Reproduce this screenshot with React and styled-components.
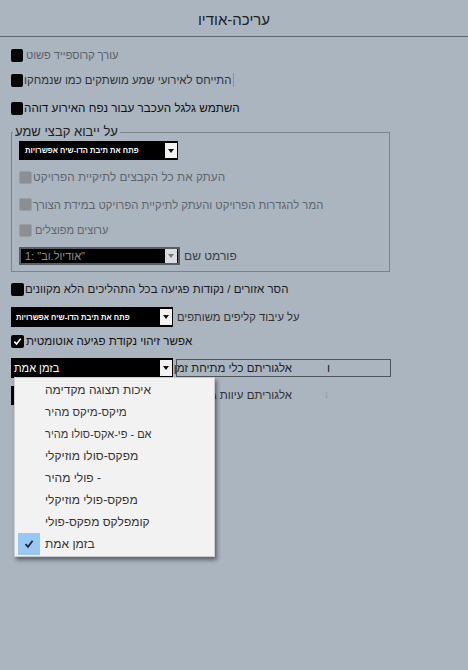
import React from 'react'
import styled, { createGlobalStyle } from 'styled-components';

const GlobalStyle = createGlobalStyle`
    html, body {
        margin: 0;
        padding: 0;
        background: #aab5c0;
    }
    body {
        font-family: "Liberation Sans", "DejaVu Sans", sans-serif;
    }
`;

const Page = styled.div`
    width: 468px;
    height: 670px;
    background: #aab5c0;
    overflow: hidden;
`;

const Header = styled.div`
    height: 37px;
    border-bottom: 1px solid #5d646b;
    display: flex;
    align-items: center;
    justify-content: center;
    font-size: 15px;
    color: #1e1e1e;
    direction: rtl;
    padding-top: 3px;
    box-sizing: border-box;
`;

const Body = styled.div`
    padding: 6px 0 0 11px;
    display: flex;
    flex-direction: column;
`;

const Row = styled.div`
    display: flex;
    align-items: center;
    height: ${({h}) => h}px;
    margin-top: ${({mt}) => mt || 0}px;
    position: relative;
`;

const boxColor = kind => {
    switch(kind){
        case "disabled":
            return "#8b8f94";
        default:
            return "#050505";
    }
}

const Box = styled.span`
    width: ${({kind}) => kind ? 13 : 12}px;
    height: 13px;
    border-radius: 2px;
    background: ${({kind}) => boxColor(kind)};
    border: ${({kind}) => kind === "disabled" ? "1px solid #9a9ea3" : "none"};
    box-sizing: border-box;
    flex-shrink: 0;
    display: flex;
    align-items: center;
    justify-content: center;
`;

const Text = styled.span`
    direction: rtl;
    unicode-bidi: isolate;
    white-space: nowrap;
    font-size: ${({size}) => size || 12}px;
    color: ${({color}) => color || "#222"};
    margin-left: ${({gap}) => gap || 1}px;
    padding-right: ${({caret}) => caret ? 2 : 0}px;
    border-right: ${({caret}) => caret ? "1px solid #8a9098" : "none"};
    line-height: 14px;
`;

const Fieldset = styled.fieldset`
    margin: 1px 0 0 0;
    padding: 1px 0 6px 7px;
    width: 379px;
    box-sizing: border-box;
    border: 1px solid #7b838b;
    min-inline-size: 0;
    display: flex;
    flex-direction: column;
`;

const Legend = styled.legend`
    direction: rtl;
    font-size: 13px;
    color: #222;
    padding: 0 2px;
    margin-left: -6px;
    line-height: 16px;
`;

const Select = styled.div`
    width: ${({w}) => w}px;
    height: ${({h}) => h}px;
    background: #000;
    box-sizing: border-box;
    border: ${({framed}) => framed ? "2px solid #585e65" : "none"};
    display: flex;
    align-items: center;
    justify-content: space-between;
    padding: 0 1px 0 ${({pl}) => pl || 5}px;
    flex-shrink: 0;
    position: relative;
`;

const SelectText = styled.span`
    direction: ${({ltr}) => ltr ? "ltr" : "rtl"};
    unicode-bidi: isolate;
    white-space: nowrap;
    color: ${({color}) => color || "#fff"};
    font-size: ${({size}) => size || 9}px;
    font-weight: ${({bold}) => bold ? 700 : 400};
`;

const Arrow = styled.span`
    width: 12px;
    height: ${({h}) => h || 15}px;
    background: ${({dim}) => dim ? "#d9dce0" : "#f2f2f2"};
    display: flex;
    align-items: center;
    justify-content: center;
    &::after {
        content: "";
        border-left: 3px solid transparent;
        border-right: 3px solid transparent;
        border-top: 4px solid ${({dim}) => dim ? "#777" : "#111"};
    }
`;

const Frame = styled.div`
    margin-left: 3px;
    width: 215px;
    height: 18px;
    box-sizing: border-box;
    border: 1px solid #4e545b;
    display: flex;
    align-items: center;
    padding-left: 3px;
`;

const FieldLabel = styled.span`
    direction: rtl;
    unicode-bidi: isolate;
    white-space: nowrap;
    width: ${({w}) => w}px;
    text-align: right;
    font-size: 11.5px;
    color: ${({color}) => color || "#222"};
    margin-left: ${({ml}) => ml || 0}px;
`;

const Stray = styled.span`
    font-size: 12px;
    color: ${({faint}) => faint ? "#9aa3ad" : "#222"};
    margin-left: ${({ml}) => ml}px;
`;

const Menu = styled.div`
    position: absolute;
    left: 3px;
    top: 19px;
    width: 201px;
    height: 180px;
    box-sizing: border-box;
    background: #f2f2f2;
    border: 1px solid #c9ccd0;
    box-shadow: 2px 3px 4px rgba(0, 0, 0, 0.45);
    padding: 1px 0;
    z-index: 10;
    display: flex;
    flex-direction: column;
`;

const MenuItem = styled.div`
    height: 22px;
    display: flex;
    align-items: center;
`;

const Tick = styled.span`
    width: 22px;
    height: 22px;
    margin-left: 3px;
    margin-right: 5px;
    background: ${({on}) => on ? "#99c8f3" : "transparent"};
    display: flex;
    align-items: center;
    justify-content: center;
`;

const ItemText = styled.span`
    direction: ${({ltr}) => ltr ? "ltr" : "rtl"};
    unicode-bidi: isolate;
    white-space: nowrap;
    font-size: ${({size}) => size || 12}px;
    color: #363636;
`;

const Check = ({color = "#fff", size = 9}) => (
    <svg width={size} height={size} viewBox="0 0 10 10">
        <path d="M1.5 5.2 L4 7.8 L8.6 1.8" fill="none" stroke={color} strokeWidth="1.8" />
    </svg>
);

const items = [
    { label: "איכות תצוגה מקדימה" },
    { label: "מיקס-מיקס מהיר", size: 11.5 },
    { label: "אם - פי-אקס-סולו מהיר", size: 11 },
    { label: "מפקס-סולו מוזיקלי" },
    { label: "פולי מהיר -", ltr: true },
    { label: "מפקס-פולי מוזיקלי" },
    { label: "קומפלקס מפקס-פולי" },
    { label: "בזמן אמת", on: true },
];

export default () => {
    return(
        <Page>
            <GlobalStyle />
            <Header>עריכה-אודיו</Header>
            <Body>
                <Row h={24}>
                    <Box />
                    <Text gap={3} color="#5a5f66" size={11}>עורך קרוספייד פשוט</Text>
                </Row>
                <Row h={26}>
                    <Box />
                    <Text color="#2e3236" size={11.4} caret>התייחס לאירועי שמע מושתקים כמו שנמחקו</Text>
                </Row>
                <Row h={30}>
                    <Box />
                    <Text color="#111" size={11.7}>השתמש גלגל העכבר עבור נפח האירוע דוהה</Text>
                </Row>

                <Fieldset>
                    <Legend>על ייבוא קבצי שמע</Legend>
                    <Row h={19}>
                        <Select w={159} h={19} pl={6}>
                            <SelectText bold size={7.6}>פתח את תיבת הדו-שיח אפשרויות</SelectText>
                            <Arrow h={15} />
                        </Select>
                    </Row>
                    <Row h={26} mt={4}>
                        <Box kind="disabled" />
                        <Text gap={1} color="#5f656c" size={11.8}>העתק את כל הקבצים לתיקיית הפרויקט</Text>
                    </Row>
                    <Row h={29}>
                        <Box kind="disabled" />
                        <Text gap={1} color="#5f656c" size={11.3}>המר להגדרות הפרויקט והעתק לתיקיית הפרויקט במידת הצורך</Text>
                    </Row>
                    <Row h={22}>
                        <Box kind="disabled" />
                        <Text gap={3} color="#5f656c" size={11}>ערוצים מפוצלים</Text>
                    </Row>
                    <Row h={18} mt={6}>
                        <Select w={161} h={18} framed pl={4}>
                            <SelectText ltr color="#8d8d8d" size={11}>1: "אודיול.וב"</SelectText>
                            <Arrow h={14} dim />
                        </Select>
                        <Text gap={4} color="#3a3f45" size={12}>פורמט שם</Text>
                    </Row>
                </Fieldset>

                <Row h={30} mt={2}>
                    <Box kind="checked" />
                    <Text gap={1} color="#1c1c1c" size={11.5}>הסר אזורים / נקודות פגיעה בכל התהליכים הלא מקוונים</Text>
                </Row>
                <Row h={26}>
                    <Select w={162} h={20} pl={5}>
                        <SelectText bold size={7.6}>פתח את תיבת הדו-שיח אפשרויות</SelectText>
                        <Arrow h={16} />
                    </Select>
                    <Text gap={4} color="#333" size={11.2}>על עיבוד קליפים משותפים</Text>
                </Row>
                <Row h={22}>
                    <Box kind="checked"><Check /></Box>
                    <Text gap={2} color="#111" size={11.6}>אפשר זיהוי נקודת פגיעה אוטומטית</Text>
                </Row>
                <Row h={32}>
                    <Select w={162} h={20} pl={3}>
                        <SelectText size={11}>בזמן אמת</SelectText>
                        <Arrow h={16} />
                        <Menu>
                            {items.map(item => (
                                <MenuItem key={item.label}>
                                    <Tick on={item.on}>{item.on && <Check color="#1d2a38" size={10} />}</Tick>
                                    <ItemText ltr={item.ltr} size={item.size}>{item.label}</ItemText>
                                </MenuItem>
                            ))}
                        </Menu>
                    </Select>
                    <Frame>
                        <FieldLabel w={112} color="#222">אלגוריתם כלי מתיחת זמן</FieldLabel>
                        <Stray ml={35}>ו</Stray>
                    </Frame>
                </Row>
                <Row h={22}>
                    <Select w={162} h={19} />
                    <FieldLabel w={112} ml={7} color="#333">אלגוריתם עיוות גובה</FieldLabel>
                    <Stray ml={33} faint>ו</Stray>
                </Row>
            </Body>
        </Page>
    );
}
